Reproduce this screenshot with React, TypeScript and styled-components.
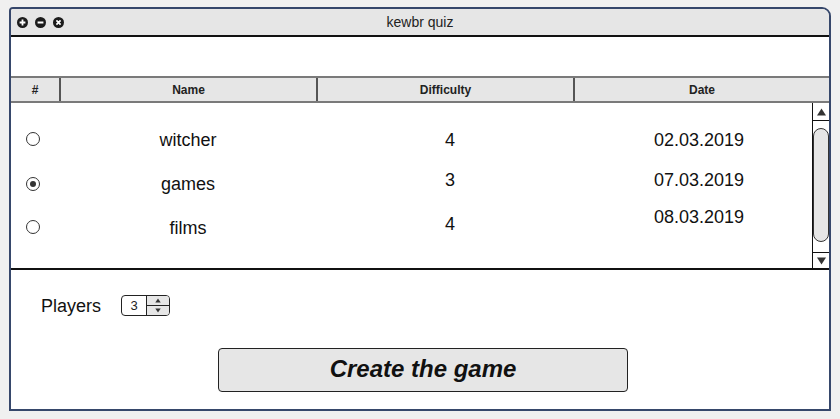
import React from "react";
import styled, { createGlobalStyle } from "styled-components";

const Global = createGlobalStyle`
  html, body { margin: 0; padding: 0; background: #f0f0f0; }
  body { font-family: "Liberation Sans", Arial, sans-serif; color: #111; }
  * { box-sizing: border-box; }
`;

const Page = styled.div`
  width: 840px;
  height: 419px;
  padding: 7px 9px 8px 9px;
`;

const Window = styled.div`
  width: 822px;
  height: 404px;
  border: 2px solid #36476b;
  border-radius: 4px 9px 0 0;
  background: #fff;
  display: flex;
  flex-direction: column;
  overflow: hidden;
`;

const TitleBar = styled.div`
  height: 28px;
  background: #e6e6e6;
  border-bottom: 2px solid #111;
  display: grid;
  grid-template-columns: 1fr auto 1fr;
  align-items: center;
`;

const Controls = styled.div`
  display: flex;
  gap: 7px;
  padding-left: 6px;
  padding-top: 1px;
`;

const Title = styled.div`
  font-size: 14px;
  line-height: 16px;
  color: #222;
  padding-bottom: 1px;
`;

const Spacer = styled.div`
  height: 39px;
`;

const HeaderRow = styled.div`
  height: 27px;
  background: #e6e6e6;
  border-top: 2px solid #7a7a7a;
  border-bottom: 2px solid #7a7a7a;
  display: grid;
  grid-template-columns: 50px 257px 257px 1fr;
`;

const HeaderCell = styled.div<{ $last?: boolean }>`
  display: flex;
  align-items: center;
  justify-content: center;
  font-size: 12px;
  font-weight: bold;
  color: #222;
  border-right: ${(p) => (p.$last ? "none" : "2px solid #555")};
`;

const Body = styled.div`
  height: 167px;
  border-bottom: 2px solid #111;
  display: flex;
`;

const Rows = styled.div`
  flex: 1;
  padding-top: 15px;
  display: grid;
  grid-template-columns: 44px 266px 258px 1fr;
  grid-auto-rows: 44px;
`;

const Cell = styled.div<{ $lift?: number; $pl?: number }>`
  display: flex;
  align-items: center;
  justify-content: center;
  font-size: 18px;
  line-height: 20px;
  color: #111;
  padding-bottom: ${(p) => (p.$lift ? p.$lift * 2 : 0)}px;
  padding-left: ${(p) => p.$pl || 0}px;
`;

const Radio = styled.span<{ $on?: boolean }>`
  width: 14px;
  height: 14px;
  border-radius: 50%;
  border: 1px solid #333;
  background: #fff;
  display: flex;
  align-items: center;
  justify-content: center;
  &::after {
    content: "";
    width: 6px;
    height: 6px;
    border-radius: 50%;
    background: ${(p) => (p.$on ? "#333" : "transparent")};
  }
`;

const ScrollBar = styled.div`
  width: 17px;
  border-left: 1px solid #111;
  display: flex;
  flex-direction: column;
  background: #fff;
`;

const ArrowBox = styled.div<{ $bottom?: boolean }>`
  height: ${(p) => (p.$bottom ? 16 : 18)}px;
  display: flex;
  align-items: center;
  justify-content: center;
  border-top: ${(p) => (p.$bottom ? "1px solid #111" : "none")};
  border-bottom: ${(p) => (p.$bottom ? "none" : "1px solid #111")};
`;

const Track = styled.div`
  flex: 1;
  padding: 7px 0 10px 0;
  display: flex;
`;

const Thumb = styled.div`
  flex: 1;
  border: 1px solid #333;
  border-radius: 9px;
  background: #e6e6e6;
`;

const Footer = styled.div`
  flex: 1;
  display: flex;
  flex-direction: column;
  padding-top: 25px;
`;

const PlayersRow = styled.div`
  display: flex;
  align-items: center;
  padding-left: 30px;
  gap: 20px;
  height: 21px;
`;

const Label = styled.span`
  font-size: 18px;
  line-height: 20px;
  color: #111;
`;

const Spinner = styled.div`
  width: 49px;
  height: 21px;
  border: 1px solid #222;
  border-radius: 4px;
  display: flex;
  overflow: hidden;
`;

const SpinValue = styled.div`
  width: 25px;
  display: flex;
  align-items: center;
  justify-content: center;
  font-size: 13px;
  color: #222;
  border-right: 1px solid #222;
`;

const SpinArrows = styled.div`
  flex: 1;
  display: flex;
  flex-direction: column;
  background: #e6e6e6;
`;

const SpinArrow = styled.div<{ $top?: boolean }>`
  flex: 1;
  display: flex;
  align-items: center;
  justify-content: center;
  border-bottom: ${(p) => (p.$top ? "1px solid #222" : "none")};
`;

const ButtonWrap = styled.div`
  padding-left: 207px;
  padding-top: 32px;
`;

const CreateButton = styled.button`
  width: 410px;
  height: 44px;
  background: #e6e6e6;
  border: 1px solid #222;
  border-radius: 4px;
  font-family: "Liberation Sans", Arial, sans-serif;
  font-size: 24px;
  font-weight: bold;
  font-style: italic;
  color: #111;
  padding: 0 0 2px 0;
  cursor: pointer;
`;

const CtrlIcon = ({ kind }: { kind: "plus" | "minus" | "close" }) => (
  <svg width="11" height="11" viewBox="0 0 11 11">
    <circle cx="5.5" cy="5.5" r="5.5" fill="#1c1c1c" />
    {kind === "plus" && (
      <path d="M5.5 2.6v5.8M2.6 5.5h5.8" stroke="#fff" strokeWidth="1.8" />
    )}
    {kind === "minus" && <path d="M2.6 5.5h5.8" stroke="#fff" strokeWidth="1.8" />}
    {kind === "close" && (
      <path d="M3.4 3.4l4.2 4.2M7.6 3.4l-4.2 4.2" stroke="#fff" strokeWidth="1.7" />
    )}
  </svg>
);

const Tri = ({ up, w = 11, h = 8 }: { up?: boolean; w?: number; h?: number }) => (
  <svg width={w} height={h} viewBox="0 0 10 8">
    <path d={up ? "M5 0.5L9.5 7.5H0.5Z" : "M0.5 0.5H9.5L5 7.5Z"} fill="#333" />
  </svg>
);

type Quiz = {
  name: string;
  diff: number;
  date: string;
  on?: boolean;
  rLift?: number;
  nLift?: number;
  dLift?: number;
  tLift?: number;
};

const quizzes: Quiz[] = [
  { name: "witcher", diff: 4, date: "02.03.2019", rLift: 1 },
  { name: "games", diff: 3, date: "07.03.2019", on: true, nLift: -1, dLift: 4, tLift: 4 },
  { name: "films", diff: 4, date: "08.03.2019", rLift: 1, dLift: 4, tLift: 11 },
];

export default function App() {
  return (
    <>
      <Global />
      <Page>
        <Window>
          <TitleBar>
            <Controls>
              <CtrlIcon kind="plus" />
              <CtrlIcon kind="minus" />
              <CtrlIcon kind="close" />
            </Controls>
            <Title>kewbr quiz</Title>
            <div />
          </TitleBar>
          <Spacer />
          <HeaderRow>
            <HeaderCell>#</HeaderCell>
            <HeaderCell>Name</HeaderCell>
            <HeaderCell>Difficulty</HeaderCell>
            <HeaderCell $last>Date</HeaderCell>
          </HeaderRow>
          <Body>
            <Rows>
              {quizzes.map((q) => (
                <React.Fragment key={q.name}>
                  <Cell $lift={q.rLift}>
                    <Radio $on={q.on} />
                  </Cell>
                  <Cell $lift={q.nLift}>{q.name}</Cell>
                  <Cell $lift={q.dLift}>{q.diff}</Cell>
                  <Cell $lift={q.tLift} $pl={7}>
                    {q.date}
                  </Cell>
                </React.Fragment>
              ))}
            </Rows>
            <ScrollBar>
              <ArrowBox>
                <Tri up />
              </ArrowBox>
              <Track>
                <Thumb />
              </Track>
              <ArrowBox $bottom>
                <Tri />
              </ArrowBox>
            </ScrollBar>
          </Body>
          <Footer>
            <PlayersRow>
              <Label>Players</Label>
              <Spinner>
                <SpinValue>3</SpinValue>
                <SpinArrows>
                  <SpinArrow $top>
                    <Tri up w={6} h={5} />
                  </SpinArrow>
                  <SpinArrow>
                    <Tri w={6} h={5} />
                  </SpinArrow>
                </SpinArrows>
              </Spinner>
            </PlayersRow>
            <ButtonWrap>
              <CreateButton>Create the game</CreateButton>
            </ButtonWrap>
          </Footer>
        </Window>
      </Page>
    </>
  );
}
